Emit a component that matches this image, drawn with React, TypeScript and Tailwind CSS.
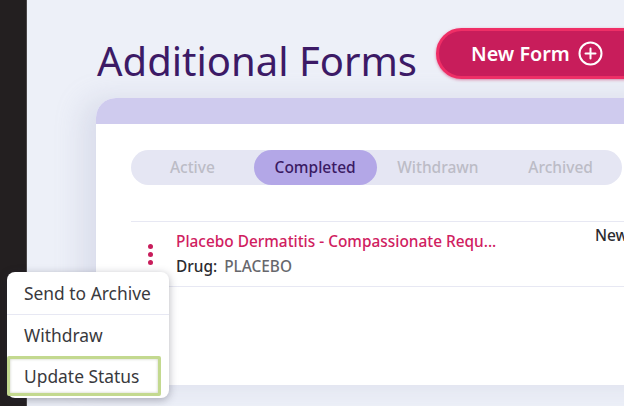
const font = { fontFamily: '"Noto Sans", "Open Sans", sans-serif' };

function PlusCircle() {
  return (
    <svg width="25" height="25" viewBox="0 0 25 25" fill="none" stroke="white" strokeWidth="2" strokeLinecap="round">
      <circle cx="12.5" cy="12.5" r="11" />
      <path d="M12.5 7.5v10M7.5 12.5h10" />
    </svg>
  );
}

function Tabs() {
  const tabs = ["Active", "Completed", "Withdrawn", "Archived"];
  return (
    <div className="flex h-[35px] w-[491px] rounded-[18px] bg-[#e5e6f3]">
      {tabs.map((t) =>
        t === "Completed" ? (
          <div key={t} className="flex w-[123px] items-center justify-center rounded-[18px] bg-[#b3a7e7] pt-px text-[15.5px] font-medium text-[#3a1a63]">
            {t}
          </div>
        ) : (
          <div key={t} className="flex w-[123px] items-center justify-center pt-px text-[15.5px] font-medium text-[#bcbcc6]">
            {t}
          </div>
        )
      )}
    </div>
  );
}

export default function App() {
  return (
    <div className="relative flex h-[406px] w-[624px] overflow-hidden bg-[#edf0f8]" style={font}>
      <div className="w-[26px] shrink-0 border-r border-[#4a4748] bg-[#231f20] box-content" />
      <div className="flex min-w-0 flex-1 flex-col pl-[69px]">
        <div className="flex h-[98px] w-[600px] shrink-0 items-start">
          <h1 className="mt-[32px] w-[340px] shrink-0 pl-px text-[40px] leading-[57px] font-normal text-[#3c1a66]">Additional Forms</h1>
          <button className="mt-[28px] flex h-[51px] w-[240px] shrink-0 items-center gap-[8px] rounded-[26px] border-[3px] border-[#ef2e66] bg-[#c81d5b] pl-[32px] text-[19.8px] font-semibold text-white shadow-[0_1px_3px_rgba(200,29,91,0.5)]">
            New Form
            <PlusCircle />
          </button>
        </div>
        <div className="flex h-[287px] w-[600px] shrink-0 flex-col rounded-t-[20px] bg-white shadow-[-14px_0_28px_rgba(150,155,190,0.22)]">
          <div className="h-[26px] shrink-0 rounded-t-[20px] bg-[#cfcbee]" />
          <div className="pl-[35px] pt-[26px]">
            <Tabs />
            <div className="mt-[36px] flex h-[66px] border-y border-[#e7e8f3]">
              <div className="flex w-[38px] shrink-0 flex-col items-center gap-[3px] pt-[22px]">
                <span className="h-[5px] w-[5px] rounded-full bg-[#c81d5b]" />
                <span className="h-[5px] w-[5px] rounded-full bg-[#c81d5b]" />
                <span className="h-[5px] w-[5px] rounded-full bg-[#c81d5b]" />
              </div>
              <div className="ml-[7px] w-[419px] shrink-0 pt-[10px]">
                <div className="text-[15.4px] leading-[20px] font-medium text-[#d0205f]">Placebo Dermatitis - Compassionate Requ...</div>
                <div className="mt-[5px] flex items-center gap-[7px] text-[15.4px] leading-[20px]">
                  <span className="font-medium text-[#2b2b2f]">Drug:</span>
                  <span className="font-medium text-[#67676c]">PLACEBO</span>
                </div>
              </div>
              <div className="pt-[3px] text-[15.5px] leading-[20px] font-medium text-[#2b2b2f]">New</div>
            </div>
          </div>
        </div>
      </div>

      <div className="absolute left-[7px] top-[272px] flex h-[126px] w-[162px] flex-col rounded-[8px] bg-white text-[17.4px] text-[#39393d] shadow-[0_2px_8px_rgba(40,40,60,0.35)]">
        <div className="flex h-[43px] items-center border-b border-[#e7e8f3] pl-[17px]">Send to Archive</div>
        <div className="flex h-[41px] items-center pl-[17px]">Withdraw</div>
        <div className="flex h-[40px] w-[154px] items-center rounded-[2px] border-[3px] border-[#c3d98f] pl-[14px] shadow-[inset_0_0_3px_rgba(120,130,90,0.4)]">Update Status</div>
      </div>
    </div>
  );
}
